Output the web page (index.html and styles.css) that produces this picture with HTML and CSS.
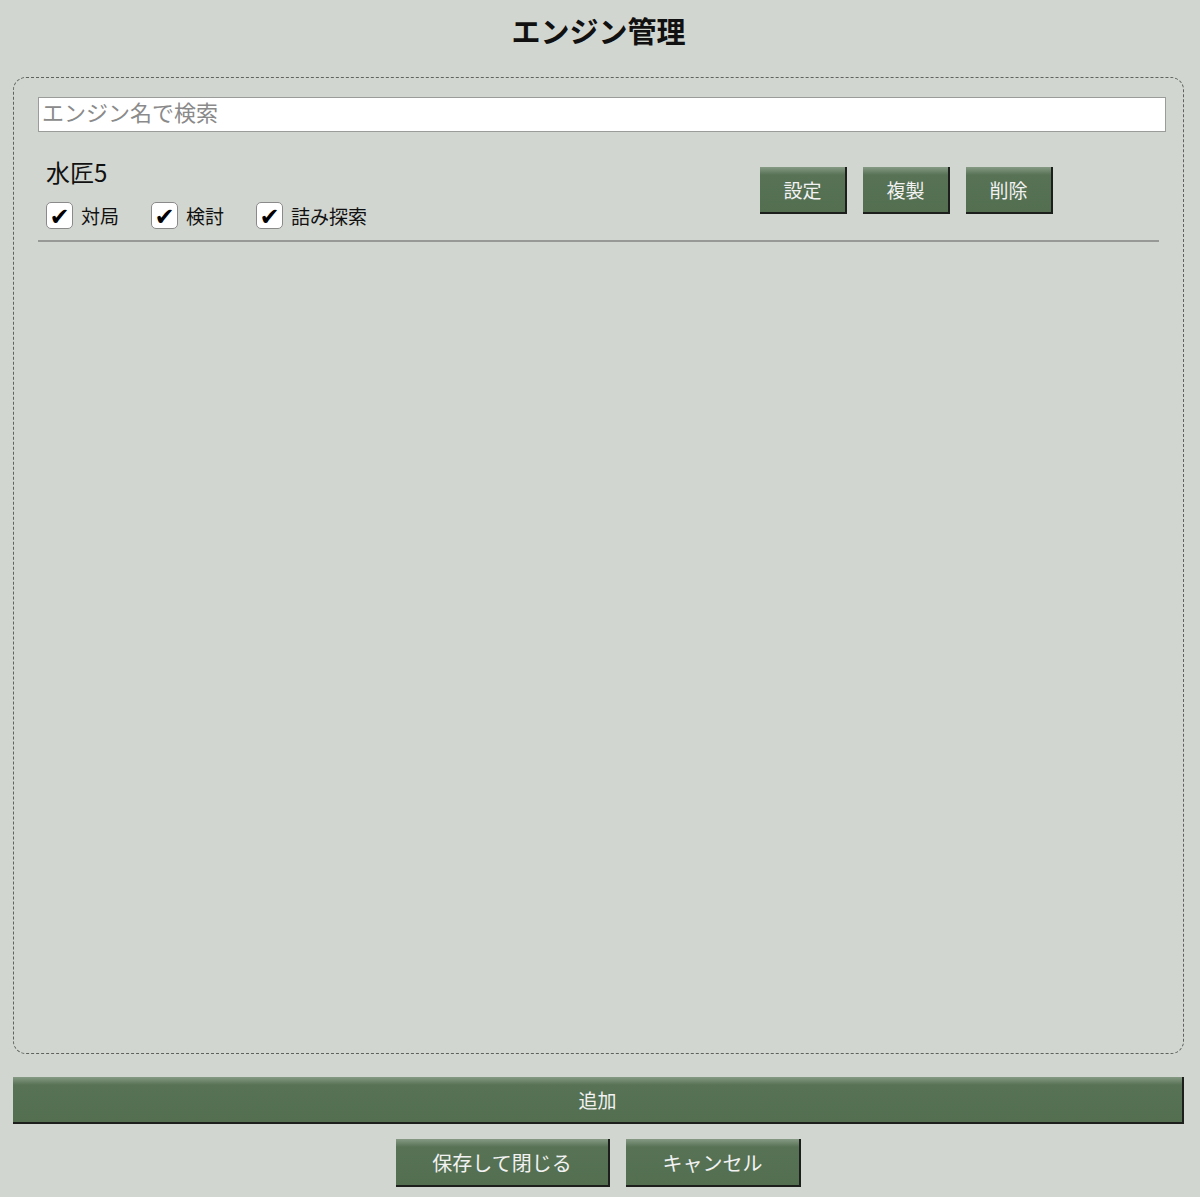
FILE: index.html
```html
<!DOCTYPE html>
<html lang="ja">
<head>
<meta charset="utf-8">
<link rel="stylesheet" href="styles.css">
</head>
<body>
<h1 class="title">エンジン管理</h1>
<div class="panel">
  <input class="search" type="text" placeholder="エンジン名で検索">
  <div class="list">
    <div class="engine">
      <div class="info">
        <div class="name">水匠5</div>
        <div class="checks">
          <label class="check"><span class="box">✔</span>対局</label>
          <label class="check"><span class="box">✔</span>検討</label>
          <label class="check"><span class="box">✔</span>詰み探索</label>
        </div>
      </div>
      <div class="actions">
        <button class="btn small">設定</button>
        <button class="btn small">複製</button>
        <button class="btn small">削除</button>
      </div>
    </div>
  </div>
</div>
<button class="btn add">追加</button>
<div class="footer">
  <button class="btn save">保存して閉じる</button>
  <button class="btn cancel">キャンセル</button>
</div>
</body>
</html>
```
FILE: styles.css
```css
html, body {
  margin: 0;
  background: #d2d6d0;
}
body {
  padding: 0 16px 0 13px;
  font-family: "Noto Sans CJK JP", "Noto Sans", sans-serif;
  color: #111;
}
.title {
  margin: 0;
  padding-top: 10px;
  height: 77px;
  box-sizing: border-box;
  text-align: center;
  font-size: 29px;
  line-height: 40px;
  font-weight: 700;
}
.panel {
  height: 977px;
  box-sizing: border-box;
  border: 1px dashed #5f625f;
  border-radius: 13px;
  padding: 19px 17px 0 24px;
}
.search {
  display: block;
  width: 100%;
  height: 35px;
  box-sizing: border-box;
  margin: 0;
  border: 1px solid #9a9c99;
  background: #fff;
  padding: 0 3px 8px;
  font-family: "Noto Sans CJK JP", sans-serif;
  font-size: 22px;
  color: #111;
  outline: none;
}
.search::placeholder {
  color: #8a8a8a;
}
.list {
  margin-right: 7px;
}
.engine {
  display: flex;
  align-items: flex-start;
  padding-top: 34px;
  padding-bottom: 11px;
  border-bottom: 2px solid #979996;
}
.info {
  flex: 1;
  padding-left: 8px;
}
.name {
  font-size: 24px;
  line-height: 32px;
  margin-top: -10px;
}
.checks {
  display: flex;
  gap: 32px;
  margin-top: 14px;
}
.check {
  display: flex;
  align-items: center;
  font-size: 19px;
  line-height: 26px;
}
.box {
  width: 27px;
  height: 27px;
  box-sizing: border-box;
  border: 1.5px solid #8a8a8a;
  border-radius: 5px;
  background: #fff;
  margin-right: 8px;
  display: flex;
  align-items: center;
  justify-content: center;
  font-family: "DejaVu Sans", sans-serif;
  font-size: 24px;
  color: #000;
  line-height: 1;
  padding-top: 3px;
}
.actions {
  display: flex;
  gap: 16px;
  margin-right: 106px;
  margin-top: 1px;
}
.btn {
  font-family: "Noto Sans CJK JP", sans-serif;
  color: #f2f2f2;
  background: linear-gradient(to bottom, #869a84 0px, #577255 8px, #536f50 100%);
  border: none;
  border-right: 2px solid #1c1f1b;
  border-bottom: 2px solid #1c1f1b;
  box-sizing: border-box;
  padding: 0;
  cursor: pointer;
}
.small {
  width: 87px;
  height: 47px;
  font-size: 19px;
}
.add {
  display: block;
  width: 100%;
  height: 47px;
  margin-top: 23px;
  font-size: 19px;
}
.footer {
  display: flex;
  justify-content: center;
  gap: 16px;
  margin-top: 15px;
}
.save {
  width: 214px;
  height: 48px;
  font-size: 20px;
}
.cancel {
  width: 175px;
  height: 48px;
  font-size: 20px;
}
```
